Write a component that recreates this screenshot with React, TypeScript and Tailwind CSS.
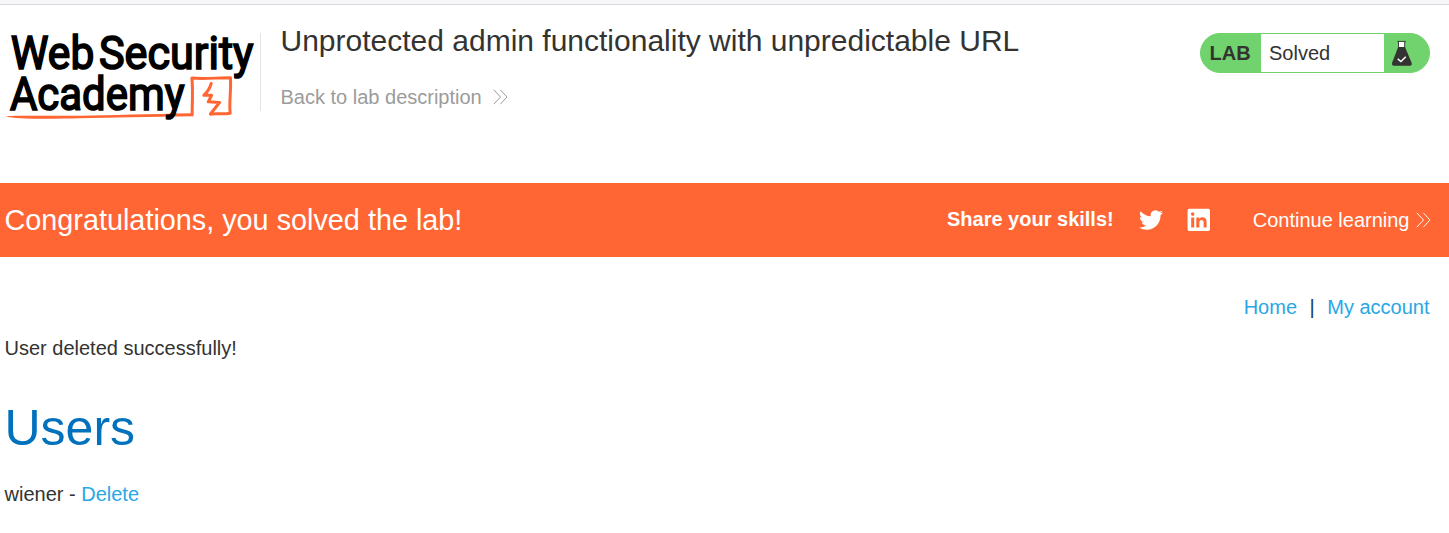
import React from "react";

function Logo() {
  return (
    <svg className="block h-[128px] w-[260px] shrink-0" viewBox="0 5 260 128" aria-label="Web Security Academy">
      <path d="M6 116.5C10 115.2 40 116.2 80 115.7C110 115.2 150 114 192 113.2L193 116.3C150 116.9 110 117.7 80 118.3C50 119 15 119.3 6 116.5Z" fill="#ff6633" />
      <g fill="none" stroke="#ff6633" strokeLinecap="round" strokeLinejoin="round">
        <path d="M192.2 114.8C192 104 193.2 92 191.9 78.1C204 79 217 77.8 230.4 77.8C231.4 90 228.8 102 230.2 113.3C225 114.4 217 113.5 210.5 114" strokeWidth="3" />
        <path d="M210.5 114L219.5 102.5L208.3 101.8L211.6 95.3L203.8 95.2Q209 91 211.2 83.5" strokeWidth="3" />
      </g>
      <g fill="#000" stroke="#000" strokeWidth="1.7" fontFamily="Roboto, sans-serif" fontWeight="400" fontSize="46">
        <text x="10.8" y="68.8" textLength="83.5" lengthAdjust="spacingAndGlyphs">Web</text>
        <text x="99" y="68.8" textLength="154.5" lengthAdjust="spacingAndGlyphs">Security</text>
        <text x="10" y="109.5" textLength="174.5" lengthAdjust="spacingAndGlyphs">Academy</text>
      </g>
    </svg>
  );
}

function Chevrons() {
  return (
    <svg className="h-4 w-[15px] shrink-0" viewBox="0 0 15 16" fill="none" stroke="currentColor" strokeWidth="1">
      <path d="M.8.8 7.5 8 .8 15.2M7.3.8 14 8 7.3 15.2" />
    </svg>
  );
}

function LabStatus() {
  return (
    <div className="mt-[28px] flex h-10 w-[230px] overflow-hidden rounded-[20px] border border-[#71d36e] bg-[#71d36e]">
      <div className="w-[60px] pl-[8.5px] text-[20px] leading-[39px] font-bold">LAB</div>
      <div className="w-[123px] bg-white pl-2 leading-[38px]">Solved</div>
      <svg className="mt-[6px] ml-[7px] h-[27px] w-[22px]" viewBox="0 0 22 27">
        <path d="M7.8 2h5.6v5.2H7.8z" fill="#fff" />
        <path d="M7.5 1.5v6M13.7 1.5v6M6.3 1.4h8.6" stroke="#333332" strokeWidth=".9" />
        <path d="M7.2 7H14l6.6 15.8Q21.4 25.7 18.8 25.7H3Q.5 25.7 1.1 22.8z" fill="#333332" />
        <path d="m6.7 18.9 3.2 2.7 4.9-4.9" fill="none" stroke="#fff" strokeWidth="1.4" />
      </svg>
    </div>
  );
}

export default function App() {
  return (
    <div className="h-[533px] overflow-hidden bg-white font-['Liberation_Sans',Arial,sans-serif] text-[20px] leading-6 text-[#333332]">
      <div className="h-[5px] border-b border-[#dadadc] bg-[#f7f7f9]" />
      <header className="flex h-[178px] pr-[19px]">
        <Logo />
        <div className="mt-[28px] h-[78px] w-px bg-[#e3e3e3]" />
        <div className="ml-[19.5px] flex-1">
          <h1 className="mt-[17px] text-[30px] leading-[38px]">Unprotected admin functionality with unpredictable URL</h1>
          <a className="mt-[25px] flex items-center gap-[11px] text-[#9b9b9b]">
            Back to lab description
            <Chevrons />
          </a>
        </div>
        <LabStatus />
      </header>
      <section className="flex h-[74px] items-center bg-[#ff6633] pr-[18.5px] pl-[4.5px] text-white">
        <h2 className="flex-1 text-[28.8px] leading-[36px]">Congratulations, you solved the lab!</h2>
        <span className="mr-[25px] -mt-[2px] font-bold">Share your skills!</span>
        <svg className="mr-6 h-6 w-6" viewBox="0 0 24 24" fill="#fff">
          <path d="M23.95 4.57a10 10 0 0 1-2.82.78 4.96 4.96 0 0 0 2.16-2.73c-.95.56-2 .96-3.13 1.19a4.92 4.92 0 0 0-8.38 4.48C7.69 8.1 4.07 6.13 1.64 3.16a4.82 4.82 0 0 0-.67 2.48c0 1.71.87 3.21 2.19 4.1a4.9 4.9 0 0 1-2.23-.62v.06a4.92 4.92 0 0 0 3.95 4.83 5 5 0 0 1-2.21.08 4.94 4.94 0 0 0 4.6 3.42A9.87 9.87 0 0 1 0 19.54a13.99 13.99 0 0 0 7.55 2.21c9.05 0 14-7.5 14-13.98 0-.21 0-.42-.02-.63A9.94 9.94 0 0 0 24 4.59z" />
        </svg>
        <svg className="mr-[42px] h-6 w-6" viewBox="0 0 24 24">
          <rect x=".6" y=".8" width="22.4" height="22.2" rx="1.7" fill="#fff" />
          <g fill="#ff6633">
            <circle cx="5.7" cy="6.1" r="1.8" />
            <path d="M4.2 9.5h3v10.1h-3zM9.3 9.5h2.9v1.4c.8-1.2 1.8-1.7 3.1-1.7 3 0 4.3 1.7 4.3 4.8v5.6h-3v-5c0-1.7-.7-2.6-2-2.6-1.5 0-2.2 1-2.2 2.6v5H9.3z" />
          </g>
        </svg>
        <a className="flex items-center gap-[6px]">
          Continue learning
          <Chevrons />
        </a>
      </section>
      <nav className="flex justify-end pt-[38px] pr-[19.5px] text-[#29a7e5]">
        <a>Home</a>
        <span className="mx-[12.5px] text-[#183b65]">|</span>
        <a>My account</a>
      </nav>
      <main className="pl-[4.5px]">
        <p className="mt-[17px]">User deleted successfully!</p>
        <h1 className="mt-[38px] text-[50px] leading-[60px] text-[#0071bc]">Users</h1>
        <div className="mt-6">
          <span>wiener - </span>
          <a className="text-[#29a7e5]">Delete</a>
        </div>
      </main>
    </div>
  );
}
